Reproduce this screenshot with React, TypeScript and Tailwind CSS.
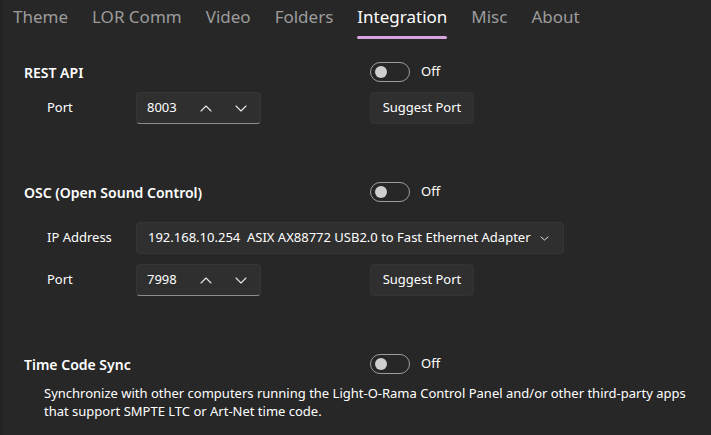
import React from 'react';

const tabs = ['Theme', 'LOR Comm', 'Video', 'Folders', 'Integration', 'Misc', 'About'];

function Chevron({ up = false, className = '' }: { up?: boolean; className?: string }) {
  return (
    <svg width="12" height="7" viewBox="0 0 12 7" className={className} fill="none">
      <polyline
        points={up ? '1,6 6,1 11,6' : '1,1 6,6 11,1'}
        stroke="#e8e8e8"
        strokeWidth="1.1"
        strokeLinecap="round"
        strokeLinejoin="round"
      />
    </svg>
  );
}

function Toggle() {
  return (
    <div className="flex items-center gap-[11px]">
      <div className="w-[40px] h-[20px] rounded-full border border-[#9d9d9d] flex items-center px-[4px]">
        <div className="w-[12px] h-[12px] rounded-full bg-[#cfcfcf]" />
      </div>
      <span className="text-[13px] text-white">Off</span>
    </div>
  );
}

function SectionHeader({ title }: { title: string }) {
  return (
    <div className="flex items-center h-[20px]">
      <div className="w-[370px] pl-[24px] text-[14px] font-semibold text-white">{title}</div>
      <Toggle />
    </div>
  );
}

function NumberBox({ value }: { value: string }) {
  return (
    <div className="w-[125px] h-[32px] rounded-[4px] bg-[#2f2f2f] border border-[#363636] border-b-[#8c8c8c] flex items-center pl-[10px]">
      <span className="text-[13px] text-white w-[50px]">{value}</span>
      <Chevron up className="ml-[3px]" />
      <Chevron className="ml-[23px]" />
    </div>
  );
}

function SuggestButton() {
  return (
    <div className="w-[104px] h-[32px] rounded-[4px] bg-[#2f2f2f] border border-[#333333] flex items-center justify-center text-[13px] text-white">
      Suggest Port
    </div>
  );
}

function PortRow({ value }: { value: string }) {
  return (
    <div className="flex items-center h-[32px]">
      <div className="w-[136px] pl-[47px] text-[13px] text-white">Port</div>
      <NumberBox value={value} />
      <div className="w-[109px]" />
      <SuggestButton />
    </div>
  );
}

export default function App() {
  return (
    <div
      className="w-[711px] h-[435px] overflow-hidden bg-[#272727] shadow-[inset_3px_0_0_#222222] text-white"
      style={{ fontFamily: '"Segoe UI", "Noto Sans", "Open Sans", sans-serif' }}
    >
      {/* Tabs */}
      <div className="flex h-[40px] pl-[1px]">
        {tabs.map((t) => (
          <div key={t} className="relative px-[12px] pt-[4px] text-[17px]">
            <span className={t === 'Integration' ? 'text-white' : 'text-[#9c9c9c]'}>{t}</span>
            {t === 'Integration' && (
              <div className="absolute left-[12px] right-[12px] top-[36px] h-[3px] rounded-full bg-[#d7a3e1]" />
            )}
          </div>
        ))}
      </div>

      <div className="mt-[22px] flex flex-col">
        <SectionHeader title="REST API" />
        <div className="mt-[10px]">
          <PortRow value="8003" />
        </div>

        <div className="mt-[58px]">
          <SectionHeader title="OSC (Open Sound Control)" />
        </div>
        <div className="mt-[20px] flex items-center h-[32px]">
          <div className="w-[136px] pl-[47px] text-[13px] text-white">IP Address</div>
          <div className="w-[428px] h-[32px] rounded-[4px] bg-[#2f2f2f] border border-[#363636] flex items-center pl-[11px] pr-[14px]">
            <span className="text-[13px] text-white flex-1 whitespace-pre">192.168.10.254  ASIX AX88772 USB2.0 to Fast Ethernet Adapter</span>
            <svg width="9" height="5" viewBox="0 0 9 5" fill="none" className="shrink-0">
              <polyline points="1,1 4.5,4 8,1" stroke="#e0e0e0" strokeWidth="1" strokeLinecap="round" strokeLinejoin="round" />
            </svg>
          </div>
        </div>
        <div className="mt-[10px]">
          <PortRow value="7998" />
        </div>

        <div className="mt-[58px]">
          <SectionHeader title="Time Code Sync" />
        </div>
        <p className="mt-[10px] pl-[44px] pr-[8px] text-[13px] leading-[18px] text-white">
          Synchronize with other computers running the Light-O-Rama Control Panel and/or other third-party apps
          that support SMPTE LTC or Art-Net time code.
        </p>
      </div>
    </div>
  );
}
